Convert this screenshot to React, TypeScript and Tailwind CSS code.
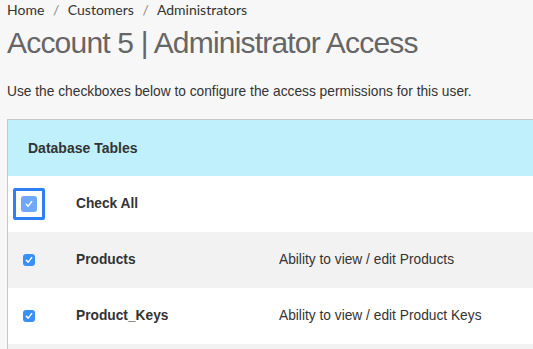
import React from "react";

function Check({ focus }: { focus?: boolean }) {
  const box = (
    <div className={`flex items-center justify-center rounded-[3px] ${focus ? "h-[16px] w-[16px] bg-[#6fa8f7]" : "h-[12px] w-[12px] bg-[#3a8ff6]"}`}>
      <svg width="8" height="8" viewBox="0 0 8 8">
        <path d="M1.3 4.3 L3.2 6.1 L6.7 1.6" fill="none" stroke="#ffffff" strokeWidth="1.5" strokeLinecap="round" strokeLinejoin="round" />
      </svg>
    </div>
  );
  if (focus) {
    return (
      <div className="flex h-[32px] w-[32px] items-center justify-center rounded-[2px] border-[3px] border-[#2f7ff2] bg-white">
        {box}
      </div>
    );
  }
  return box;
}

function Row({ name, desc, gray, focus }: { name: string; desc?: string; gray?: boolean; focus?: boolean }) {
  return (
    <div className={`flex h-[56px] items-center ${gray ? "bg-[#f2f2f2]" : "bg-white"}`}>
      <div className={`flex w-[68px] ${focus ? "pl-[5px]" : "pl-[15px]"}`}>
        <Check focus={focus} />
      </div>
      <div className="w-[203px] pt-[1px] text-[13.75px] font-bold text-[#333]">{name}</div>
      <div className="pt-[1px] text-[13.75px] text-[#333]">{desc}</div>
    </div>
  );
}

export default function App() {
  return (
    <div className="h-[349px] w-[533px] overflow-hidden bg-[#f7f7f7]" style={{ fontFamily: '"Liberation Sans", Arial, sans-serif' }}>
      <div className="pl-[7px]">
        <div className="pt-[1px] text-[14px] leading-[18px] text-[#333]" style={{ fontFamily: 'Lato, sans-serif' }}>
          Home <span className="px-[5px] text-[#888]">/</span> Customers <span className="px-[5px] text-[#888]">/</span> Administrators
        </div>
        <h1 className="mt-[5px] text-[30px] leading-[38px] tracking-[-0.8px] text-[#666]">Account 5 | Administrator Access</h1>
        <p className="mt-[22px] text-[13.75px] leading-[16px] text-[#333]">Use the checkboxes below to configure the access permissions for this user.</p>
        <div className="mt-[19px] w-[700px] border-l border-t border-[#c8c8c8]">
          <div className="flex h-[56px] items-center bg-[#bff0fb] pl-[20px] pt-[1px] text-[14px] font-bold text-[#333]">Database Tables</div>
          <Row name="Check All" focus />
          <Row name="Products" desc="Ability to view / edit Products" gray />
          <Row name="Product_Keys" desc="Ability to view / edit Product Keys" />
          <Row name="" gray />
        </div>
      </div>
    </div>
  );
}
